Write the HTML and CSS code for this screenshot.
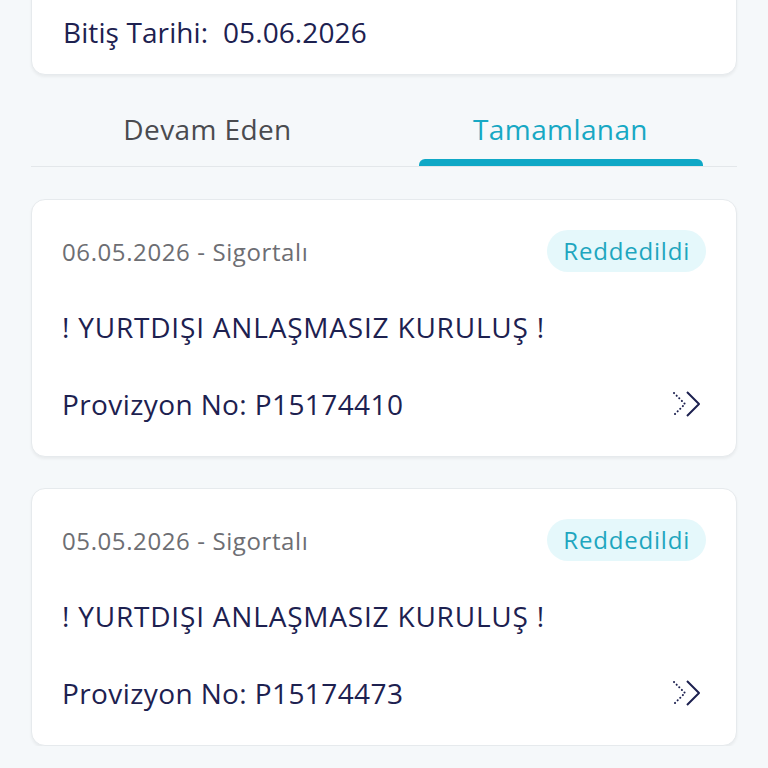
FILE: index.html
```html
<!DOCTYPE html>
<html lang="tr">
<head>
    <meta charset="UTF-8">
    <meta name="viewport" content="width=device-width, initial-scale=1.0">
    <title>Provizyonlar</title>
    <link rel="stylesheet" href="styles.css">
</head>
<body>
    <div class="page">
        <div class="policy-card">
            <p class="policy-row">Başlangıç Tarihi:  05.05.2026</p>
            <p class="policy-row">Bitiş Tarihi:  05.06.2026</p>
        </div>

        <div class="tabs">
            <div class="tab">
                <span class="tab-label">Devam Eden</span>
            </div>
            <div class="tab active">
                <span class="tab-label">Tamamlanan</span>
                <span class="tab-bar"></span>
            </div>
        </div>

        <div class="list">
            <div class="claim-card">
                <div class="claim-head">
                    <span class="claim-date">06.05.2026 - Sigortalı</span>
                    <span class="badge">Reddedildi</span>
                </div>
                <p class="claim-title">! YURTDIŞI ANLAŞMASIZ KURULUŞ !</p>
                <div class="claim-foot">
                    <span class="claim-no">Provizyon No: P15174410</span>
                    <svg class="arrow" width="34" height="30" viewBox="0 0 34 30">
                        <polyline points="4,4 15,15 4,26" fill="none" stroke="#1d2150" stroke-width="2" stroke-linecap="round" stroke-dasharray="0.1 3.6"/>
                        <polyline points="17,3 29,15 17,27" fill="none" stroke="#1d2150" stroke-width="2" stroke-linejoin="round"/>
                    </svg>
                </div>
            </div>

            <div class="claim-card">
                <div class="claim-head">
                    <span class="claim-date">05.05.2026 - Sigortalı</span>
                    <span class="badge">Reddedildi</span>
                </div>
                <p class="claim-title">! YURTDIŞI ANLAŞMASIZ KURULUŞ !</p>
                <div class="claim-foot">
                    <span class="claim-no">Provizyon No: P15174473</span>
                    <svg class="arrow" width="34" height="30" viewBox="0 0 34 30">
                        <polyline points="4,4 15,15 4,26" fill="none" stroke="#1d2150" stroke-width="2" stroke-linecap="round" stroke-dasharray="0.1 3.6"/>
                        <polyline points="17,3 29,15 17,27" fill="none" stroke="#1d2150" stroke-width="2" stroke-linejoin="round"/>
                    </svg>
                </div>
            </div>
        </div>
    </div>
</body>
</html>
```

FILE: styles.css
```css
body {
    margin: 0;
    background-color: #f5f8fa;
    font-family: "Open Sans", Lato, sans-serif;
    color: #1d2150;
}
.page {
    width: 706px;
    margin: -40px auto 0;
}
.policy-card {
    background-color: white;
    border: 1px solid #e6eaed;
    border-radius: 14px;
    padding: 0 30px 25px 31px;
    box-shadow: 0 2px 3px rgba(0, 0, 0, 0.05);
}
.policy-row {
    margin: 0;
    font-size: 28px;
    line-height: 34px;
    letter-spacing: 0.1px;
    white-space: pre;
}
.policy-row + .policy-row {
    margin-top: 20px;
}
.tabs {
    display: flex;
    border-bottom: 1px solid #e3e7ea;
}
.tab {
    flex: 1;
    display: flex;
    flex-direction: column;
    align-items: center;
    padding-top: 37px;
}
.tab-label {
    font-size: 28px;
    line-height: 34px;
    letter-spacing: 0.4px;
    color: #4a4b4f;
    padding-bottom: 20px;
}
.tab.active .tab-label {
    color: #17a8c4;
    padding-bottom: 13px;
}
.tab-bar {
    width: 284px;
    height: 7px;
    background-color: #0fa8c6;
    border-radius: 6px 6px 0 0;
}
.list {
    display: flex;
    flex-direction: column;
    gap: 31px;
    margin-top: 32px;
}
.claim-card {
    background-color: white;
    border: 1px solid #e6eaed;
    border-radius: 14px;
    padding: 30px 30px 35px 30px;
    box-shadow: 0 2px 3px rgba(0, 0, 0, 0.05);
}
.claim-head {
    display: flex;
    justify-content: space-between;
    align-items: center;
    height: 42px;
}
.claim-date {
    font-size: 24px;
    letter-spacing: 0.6px;
    color: #6d6e73;
}
.badge {
    background-color: #e5f8fb;
    color: #1ea6bf;
    font-size: 24px;
    letter-spacing: 0.8px;
    line-height: 42px;
    padding: 0 16px;
    border-radius: 21px;
}
.claim-title {
    margin: 38px 0 0;
    font-size: 28px;
    line-height: 34px;
    letter-spacing: 0.8px;
}
.claim-foot {
    display: flex;
    justify-content: space-between;
    align-items: center;
    margin-top: 43px;
}
.claim-no {
    font-size: 28px;
    line-height: 34px;
    letter-spacing: 0.4px;
}
.arrow {
    margin-right: 2px;
}
```
